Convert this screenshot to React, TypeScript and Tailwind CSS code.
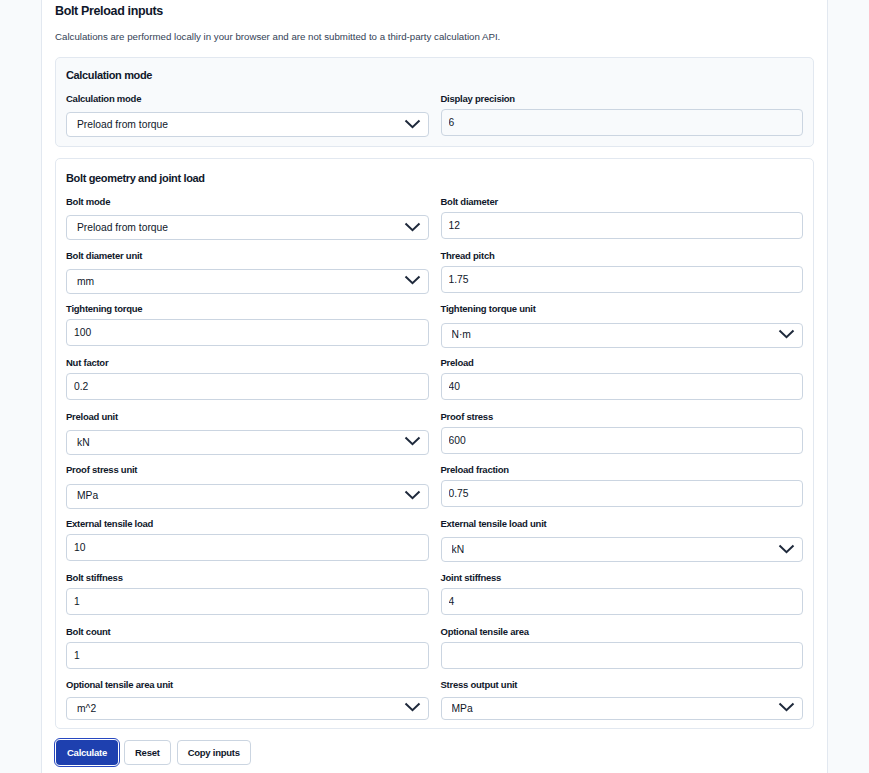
import React from 'react';

type Field =
  | { label: string; kind: 'input'; value: string }
  | { label: string; kind: 'select'; value: string };

const FONT = { fontFamily: '"Liberation Sans", Arial, sans-serif' };

function Chevron() {
  return (
    <svg
      className="pointer-events-none absolute right-[8px] top-1/2 -translate-y-1/2"
      width="17"
      height="10"
      viewBox="0 0 17 10"
      fill="none"
    >
      <polyline points="1.5,1.5 8.5,8.2 15.5,1.5" stroke="#1e293b" strokeWidth="2" />
    </svg>
  );
}

function Control({ field, last, muted }: { field: Field; last?: boolean; muted?: boolean }) {
  if (field.kind === 'select') {
    return (
      <div className={`relative ${last ? 'h-[23px]' : 'mt-[2px] h-[25px]'}`}>
        <select
          defaultValue={field.value}
          className="h-full w-full appearance-none rounded-[4px] border border-[#cbd5e1] bg-white pl-[10px] pr-8 text-[10.3px] text-[#0f172a] outline-none"
        >
          <option>{field.value}</option>
        </select>
        <Chevron />
      </div>
    );
  }
  return (
    <input
      defaultValue={field.value}
      className={`h-[27px] w-full rounded-[4px] border border-[#cbd5e1] px-[7px] text-[10.3px] text-[#0f172a] outline-none ${
        muted ? 'bg-[#f8fafc]' : 'bg-white'
      }`}
    />
  );
}

function FieldBox({ field, last, muted }: { field: Field; last?: boolean; muted?: boolean }) {
  return (
    <div className="flex flex-col">
      <label className="mb-[3px] text-[9.5px] font-bold leading-[14px] tracking-[-0.25px] text-[#0f172a]">
        {field.label}
      </label>
      <Control field={field} last={last} muted={muted} />
    </div>
  );
}

const geometry: Field[] = [
  { label: 'Bolt mode', kind: 'select', value: 'Preload from torque' },
  { label: 'Bolt diameter', kind: 'input', value: '12' },
  { label: 'Bolt diameter unit', kind: 'select', value: 'mm' },
  { label: 'Thread pitch', kind: 'input', value: '1.75' },
  { label: 'Tightening torque', kind: 'input', value: '100' },
  { label: 'Tightening torque unit', kind: 'select', value: 'N·m' },
  { label: 'Nut factor', kind: 'input', value: '0.2' },
  { label: 'Preload', kind: 'input', value: '40' },
  { label: 'Preload unit', kind: 'select', value: 'kN' },
  { label: 'Proof stress', kind: 'input', value: '600' },
  { label: 'Proof stress unit', kind: 'select', value: 'MPa' },
  { label: 'Preload fraction', kind: 'input', value: '0.75' },
  { label: 'External tensile load', kind: 'input', value: '10' },
  { label: 'External tensile load unit', kind: 'select', value: 'kN' },
  { label: 'Bolt stiffness', kind: 'input', value: '1' },
  { label: 'Joint stiffness', kind: 'input', value: '4' },
  { label: 'Bolt count', kind: 'input', value: '1' },
  { label: 'Optional tensile area', kind: 'input', value: '' },
  { label: 'Optional tensile area unit', kind: 'select', value: 'm^2' },
  { label: 'Stress output unit', kind: 'select', value: 'MPa' },
];

const plainButton =
  'h-[25px] rounded-[4px] border border-[#cbd5e1] bg-white px-[10px] text-[9.5px] font-bold tracking-[-0.25px] text-[#0f172a]';

export default function App() {
  return (
    <div className="min-h-screen bg-[#f8fafc] px-[41px]" style={FONT}>
      <div className="min-h-screen border-x border-[#e2e8f0] bg-white px-[13px] pb-[8px] pt-[2px]">
        <h2 className="text-[12.5px] font-bold leading-[18px] tracking-[-0.35px] text-[#0f172a]">
          Bolt Preload inputs
        </h2>
        <p className="mt-[10px] text-[9.7px] leading-[14px] text-[#334155]">
          Calculations are performed locally in your browser and are not submitted to a third-party calculation API.
        </p>

        {/* Calculation mode */}
        <section className="mt-[13px] rounded-[5px] border border-[#e2e8f0] bg-[#f8fafc] px-[10px] pb-[10px] pt-[10px]">
          <h3 className="mb-[10px] text-[11px] font-bold leading-[14px] tracking-[-0.35px] text-[#0f172a]">
            Calculation mode
          </h3>
          <div className="grid grid-cols-2 gap-x-[12px]">
            <FieldBox field={{ label: 'Calculation mode', kind: 'select', value: 'Preload from torque' }} />
            <FieldBox field={{ label: 'Display precision', kind: 'input', value: '6' }} muted />
          </div>
        </section>

        {/* Bolt geometry */}
        <section className="mt-[11px] rounded-[5px] border border-[#e2e8f0] bg-white px-[10px] pb-[10px] pt-[12px]">
          <h3 className="mb-[10px] text-[11px] font-bold leading-[14px] tracking-[-0.35px] text-[#0f172a]">
            Bolt geometry and joint load
          </h3>
          <div className="grid grid-cols-2 gap-x-[12px] gap-y-[9.7px]">
            {geometry.map((f, i) => (
              <FieldBox key={f.label} field={f} last={i >= geometry.length - 2} />
            ))}
          </div>
        </section>

        <div className="mt-[11px] flex items-center gap-[6px] pl-[1px]">
          <button className="h-[25px] rounded-[4px] bg-[#1e40af] px-[11px] text-[9.5px] font-bold tracking-[-0.25px] text-white outline outline-1 outline-offset-[1px] outline-[#2748c0]">
            Calculate
          </button>
          <button className={plainButton}>Reset</button>
          <button className={plainButton}>Copy inputs</button>
        </div>
      </div>
    </div>
  );
}
